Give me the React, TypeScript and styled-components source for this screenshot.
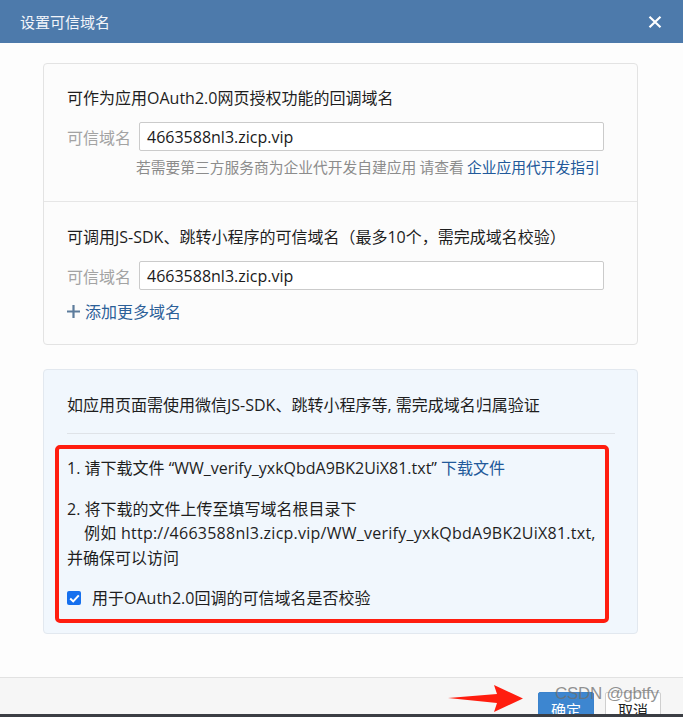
import React from "react";
import styled, { createGlobalStyle } from "styled-components";

const Global = createGlobalStyle`
  html, body { margin: 0; padding: 0; background: #fdfdfd; }
  body {
    font-family: "Open Sans", "Noto Sans CJK SC", sans-serif;
    color: #222;
  }
  * { box-sizing: border-box; }
`;

const Dialog = styled.div`
  width: 683px;
  height: 717px;
  display: flex;
  flex-direction: column;
  overflow: hidden;
  position: relative;
`;

const Header = styled.div`
  height: 43px;
  flex: none;
  background: #4d7aab;
  display: flex;
  align-items: center;
  justify-content: space-between;
  padding: 0 20px 0 20px;
`;

const HeaderTitle = styled.div`
  color: #f2f5fa;
  font-size: 15px;
  font-family: "Noto Sans CJK SC", sans-serif;
`;

const CloseBtn = styled.div`
  width: 16px;
  height: 16px;
  display: flex;
  align-items: center;
  justify-content: center;
`;

const Content = styled.div`
  flex: 1;
  padding: 20px 45px 0 43px;
  display: flex;
  flex-direction: column;
  gap: 24px;
`;

const Card = styled.div`
  border: 1px solid #e3e3e3;
  border-radius: 4px;
  background: #fcfcfc;
`;

const Section = styled.div<{ $pt: number; $pb: number; $divider?: boolean }>`
  padding: ${(p) => p.$pt}px 24px ${(p) => p.$pb}px 23px;
  border-top: ${(p) => (p.$divider ? "1px solid #e6e6e6" : "none")};
`;

const SectionTitle = styled.div`
  font-size: 16px;
  line-height: 24px;
  color: #1e1e1e;
`;

const FieldRow = styled.div`
  display: flex;
  align-items: center;
  margin-top: 12px;
`;

const FieldLabel = styled.div`
  width: 72px;
  flex: none;
  font-size: 16px;
  color: #a3a3a3;
  font-family: "Noto Sans CJK SC", sans-serif;
`;

const Input = styled.div`
  width: 465px;
  height: 29px;
  border: 1px solid #cbcbcb;
  border-radius: 2px;
  background: #fff;
  padding-left: 7px;
  display: flex;
  align-items: center;
  font-size: 16px;
  color: #1a1a1a;
`;

const Hint = styled.div`
  margin: 4px 0 0 69px;
  font-size: 14.75px;
  line-height: 24px;
  color: #8c8c8c;
  font-family: "Noto Sans CJK SC", sans-serif;
`;

const Link = styled.span`
  color: #22599a;
`;

const AddMore = styled.div`
  margin-top: 9px;
  display: flex;
  align-items: center;
  gap: 5px;
  font-size: 16px;
  line-height: 24px;
  color: #2c6098;
  font-family: "Noto Sans CJK SC", sans-serif;
`;

const InfoCard = styled.div`
  border: 1px solid #e2e8ef;
  border-radius: 4px;
  background: #f1f7fd;
  padding: 23px 22px 10px 23px;
`;

const InfoTitle = styled.div`
  font-size: 16px;
  line-height: 24px;
  color: #1e1e1e;
`;

const Divider = styled.div`
  height: 1px;
  background: #dfe3e8;
  margin-top: 16px;
`;

const StepsBox = styled.div`
  margin: 11px 6px 0 -12px;
  border: 4px solid #ff1d0f;
  border-radius: 5px;
  padding: 7px 8px 9px 8px;
`;

const Para = styled.div<{ $mt?: number }>`
  margin-top: ${(p) => p.$mt ?? 0}px;
  font-size: 16px;
  line-height: 24.5px;
  color: #1e1e1e;
`;

const Indent = styled.span`
  padding-left: 17px;
  letter-spacing: 0.25px;
`;

const CheckRow = styled.div`
  margin-top: 16px;
  display: flex;
  align-items: center;
  gap: 11px;
  font-size: 16px;
  line-height: 24px;
  color: #1e1e1e;
`;

const CheckBox = styled.span`
  width: 14px;
  height: 14px;
  border-radius: 2px;
  background: #1670ee;
  display: inline-flex;
  align-items: center;
  justify-content: center;
`;

const Footer = styled.div`
  height: 37px;
  flex: none;
  background: #f6f6f6;
  border-top: 1px solid #e2e2e2;
  display: flex;
  justify-content: flex-end;
  align-items: flex-start;
  gap: 11px;
  padding: 14px 22px 0 0;
  overflow: hidden;
  position: relative;
`;

const Button = styled.div<{ $primary?: boolean }>`
  width: 56px;
  height: 30px;
  border-radius: 2px;
  border: 1px solid ${(p) => (p.$primary ? "#3a82cc" : "#cfcfcf")};
  background: ${(p) => (p.$primary ? "#3d86d0" : "#fff")};
  color: ${(p) => (p.$primary ? "#fff" : "#222")};
  font-size: 15px;
  font-family: "Noto Sans CJK SC", sans-serif;
  display: flex;
  justify-content: center;
  padding-top: 6px;
`;

const Taskbar = styled.div`
  height: 3px;
  flex: none;
  background: #3b3e44;
`;

const Arrow = styled.svg`
  position: absolute;
  left: 447px;
  top: 6px;
`;

const Watermark = styled.div`
  position: absolute;
  left: 555px;
  top: 6px;
  font-family: "Liberation Sans", Arial, sans-serif;
  font-size: 17px;
  color: rgba(110, 110, 110, 0.75);
  letter-spacing: -0.3px;
  pointer-events: none;
`;

export default function App() {
  return (
    <>
      <Global />
      <Dialog>
        <Header>
          <HeaderTitle>设置可信域名</HeaderTitle>
          <CloseBtn>
            <svg width="14" height="12" viewBox="0 0 14 12">
              <path d="M1.5 0.8 L12.5 11.2 M12.5 0.8 L1.5 11.2" stroke="#fff" strokeWidth="2.2" />
            </svg>
          </CloseBtn>
        </Header>
        <Content>
          <Card>
            <Section $pt={22} $pb={22}>
              <SectionTitle>可作为应用OAuth2.0网页授权功能的回调域名</SectionTitle>
              <FieldRow>
                <FieldLabel>可信域名</FieldLabel>
                <Input>4663588nl3.zicp.vip</Input>
              </FieldRow>
              <Hint>
                若需要第三方服务商为企业代开发自建应用 请查看 <Link>企业应用代开发指引</Link>
              </Hint>
            </Section>
            <Section $pt={23} $pb={21} $divider>
              <SectionTitle>可调用JS-SDK、跳转小程序的可信域名（最多10个，需完成域名校验）</SectionTitle>
              <FieldRow>
                <FieldLabel>可信域名</FieldLabel>
                <Input>4663588nl3.zicp.vip</Input>
              </FieldRow>
              <AddMore>
                <svg width="13" height="13" viewBox="0 0 13 13">
                  <path d="M6.5 0 V13 M0 6.5 H13" stroke="#5d7c9c" strokeWidth="2.2" />
                </svg>
                添加更多域名
              </AddMore>
            </Section>
          </Card>
          <InfoCard>
            <InfoTitle>如应用页面需使用微信JS-SDK、跳转小程序等, 需完成域名归属验证</InfoTitle>
            <Divider />
            <StepsBox>
              <Para>
                1. 请下载文件 “WW_verify_yxkQbdA9BK2UiX81.txt” <Link>下载文件</Link>
              </Para>
              <Para $mt={16}>2. 将下载的文件上传至填写域名根目录下</Para>
              <Para>
                <Indent>例如 http://4663588nl3.zicp.vip/WW_verify_yxkQbdA9BK2UiX81.txt,</Indent>
              </Para>
              <Para>并确保可以访问</Para>
              <CheckRow>
                <CheckBox>
                  <svg width="11" height="9" viewBox="0 0 11 9">
                    <path d="M1.2 4.6 L4.2 7.4 L9.8 1.4" stroke="#fff" strokeWidth="2" fill="none" />
                  </svg>
                </CheckBox>
                用于OAuth2.0回调的可信域名是否校验
              </CheckRow>
            </StepsBox>
          </InfoCard>
        </Content>
        <Footer>
          <Arrow width="78" height="30" viewBox="0 0 78 30">
            <polygon points="1,14 50,10 47,1 76,14.5 47,28 50,19" fill="#ff1d0f" />
          </Arrow>
          <Button $primary>确定</Button>
          <Button>取消</Button>
          <Watermark>CSDN @gbtfy</Watermark>
        </Footer>
        <Taskbar />
      </Dialog>
    </>
  );
}
